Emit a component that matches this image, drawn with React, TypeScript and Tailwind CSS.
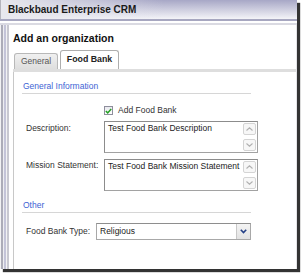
import React from 'react';

function ScrollBtn({ up }: { up?: boolean }) {
  return (
    <div className="w-[13px] h-[12px] border border-[#d4d4d4] bg-[#f7f7f7] rounded-[2px] flex items-center justify-center">
      <svg width="7" height="4" viewBox="0 0 7 4">
        <path
          d={up ? 'M0.5 3.5L3.5 0.8L6.5 3.5' : 'M0.5 0.5L3.5 3.2L6.5 0.5'}
          stroke="#b0b0b0"
          strokeWidth="1.1"
          fill="none"
        />
      </svg>
    </div>
  );
}

function TextBox({ text }: { text: string }) {
  return (
    <div className="w-[154px] h-[32px] border border-[#a2a2a2] border-l-[#8c8c8c] border-t-[#8c8c8c] bg-white flex">
      <div className="flex-1 pl-[3px] pt-[1px] leading-[11px] text-[#222]">{text}</div>
      <div className="flex flex-col justify-between py-[1px] pr-[1px]">
        <ScrollBtn up />
        <ScrollBtn />
      </div>
    </div>
  );
}

function SectionTitle({ label }: { label: string }) {
  return (
    <div className="pl-[9px] pr-[45px]">
      <div className="leading-[11px] text-[#3d63d4]">{label}</div>
      <div className="mt-[1px] h-px bg-[#d6d6d6] -ml-px" />
    </div>
  );
}

export default function App() {
  return (
    <div className="w-[302px] h-[275px] bg-white font-['Liberation_Sans',Arial,sans-serif] text-[8.5px] text-[#333]">
      <div className="w-[297px] h-[269px] flex flex-col bg-white shadow-[3px_3px_1px_rgba(0,0,0,0.8)] overflow-hidden">
        {/* title bar */}
        <div className="h-[19px] flex items-center pl-[7px] border-l border-[#b4b4bc] bg-[linear-gradient(to_right,#e8e8ee_0%,rgba(232,232,238,0)_55%),linear-gradient(to_bottom,#a7a7c6,#f4f4f8)]">
          <span className="font-bold text-[10px] text-[#1a1a1a]">Blackbaud Enterprise CRM</span>
        </div>
        <div className="h-[2px] bg-[#a7a7c0]" />
        <div className="h-[2px] bg-white" />
        <div className="h-[2px] bg-[#dadae2]" />

        <div className="flex flex-1">
          {/* left window frame */}
          <div className="flex w-[9px]">
            <div className="w-px bg-[#f2f2f4]" />
            <div className="w-[2px] bg-[#acacb8]" />
            <div className="w-px bg-[#eeeef2]" />
            <div className="w-[2px] bg-[#c4c4d8]" />
            <div className="w-px bg-[#f2f2f4]" />
            <div className="w-[2px] bg-[#c8c8d0]" />
          </div>

          {/* content */}
          <div className="flex-1 flex flex-col border-r border-[#e4e4e8]">
            <div className="pl-[4px] mt-[7px] font-bold text-[10.5px] leading-[13px] text-[#111]">
              Add an organization
            </div>

            {/* tabs */}
            <div className="mt-[5px] pl-[5px] flex items-end gap-[2px] h-[19px]">
              <div className="w-[44px] h-[16px] border border-b-0 border-[#b8b8b8] rounded-t-[3px] bg-[linear-gradient(to_bottom,#f0f0f0,#dedede)] flex items-center justify-center text-[#555]">
                General
              </div>
              <div className="w-[59px] h-[19px] border border-b-0 border-[#aeaeae] rounded-t-[3px] bg-white flex items-center justify-center font-bold text-[8.8px] text-[#222]">
                Food Bank
              </div>
            </div>
            <div className="ml-[4px] h-[3px] bg-[#dedede]" />

            {/* tab panel */}
            <div className="ml-[4px] flex-1 border-l border-[#c8c8c8] flex flex-col">
              <div className="mt-[9px]">
                <SectionTitle label="General Information" />
              </div>

              <div className="mt-[11px] pl-[90px] flex items-center gap-[5px] h-[11px]">
                <div className="w-[9px] h-[9px] border border-[#8e8e9c] bg-[linear-gradient(to_bottom,#e8e8ee,#ffffff)] flex items-center justify-center">
                  <svg width="7" height="6" viewBox="0 0 7 6">
                    <path d="M0.8 3L2.7 4.9L6.2 0.9" stroke="#24a024" strokeWidth="1.5" fill="none" />
                  </svg>
                </div>
                <span className="leading-[11px]">Add Food Bank</span>
              </div>

              <div className="mt-[5px] pl-[12px] flex">
                <div className="w-[78px] pt-[2px] leading-[11px]">Description:</div>
                <TextBox text="Test Food Bank Description" />
              </div>

              <div className="mt-[6px] pl-[12px] flex">
                <div className="w-[78px] pt-[1px] leading-[11px]">Mission Statement:</div>
                <TextBox text="Test Food Bank Mission Statement" />
              </div>

              <div className="mt-[9px]">
                <SectionTitle label="Other" />
              </div>

              <div className="mt-[10px] pl-[12px] flex items-center">
                <div className="w-[70px] leading-[11px]">Food Bank Type:</div>
                <div className="w-[155px] h-[17px] border border-[#a8a8a8] border-t-[#8e8e8e] bg-white flex">
                  <div className="flex-1 pl-[3px] flex items-center text-[#222]">Religious</div>
                  <div className="w-[14px] border-l border-[#c8c8c8] bg-[linear-gradient(to_bottom,#f4f4f4,#e2e2e2)] flex items-center justify-center">
                    <svg width="7" height="5" viewBox="0 0 7 5">
                      <path d="M0.8 0.8L3.5 3.6L6.2 0.8" stroke="#233f86" strokeWidth="1.6" fill="none" />
                    </svg>
                  </div>
                </div>
              </div>
            </div>
          </div>
        </div>
      </div>
    </div>
  );
}
